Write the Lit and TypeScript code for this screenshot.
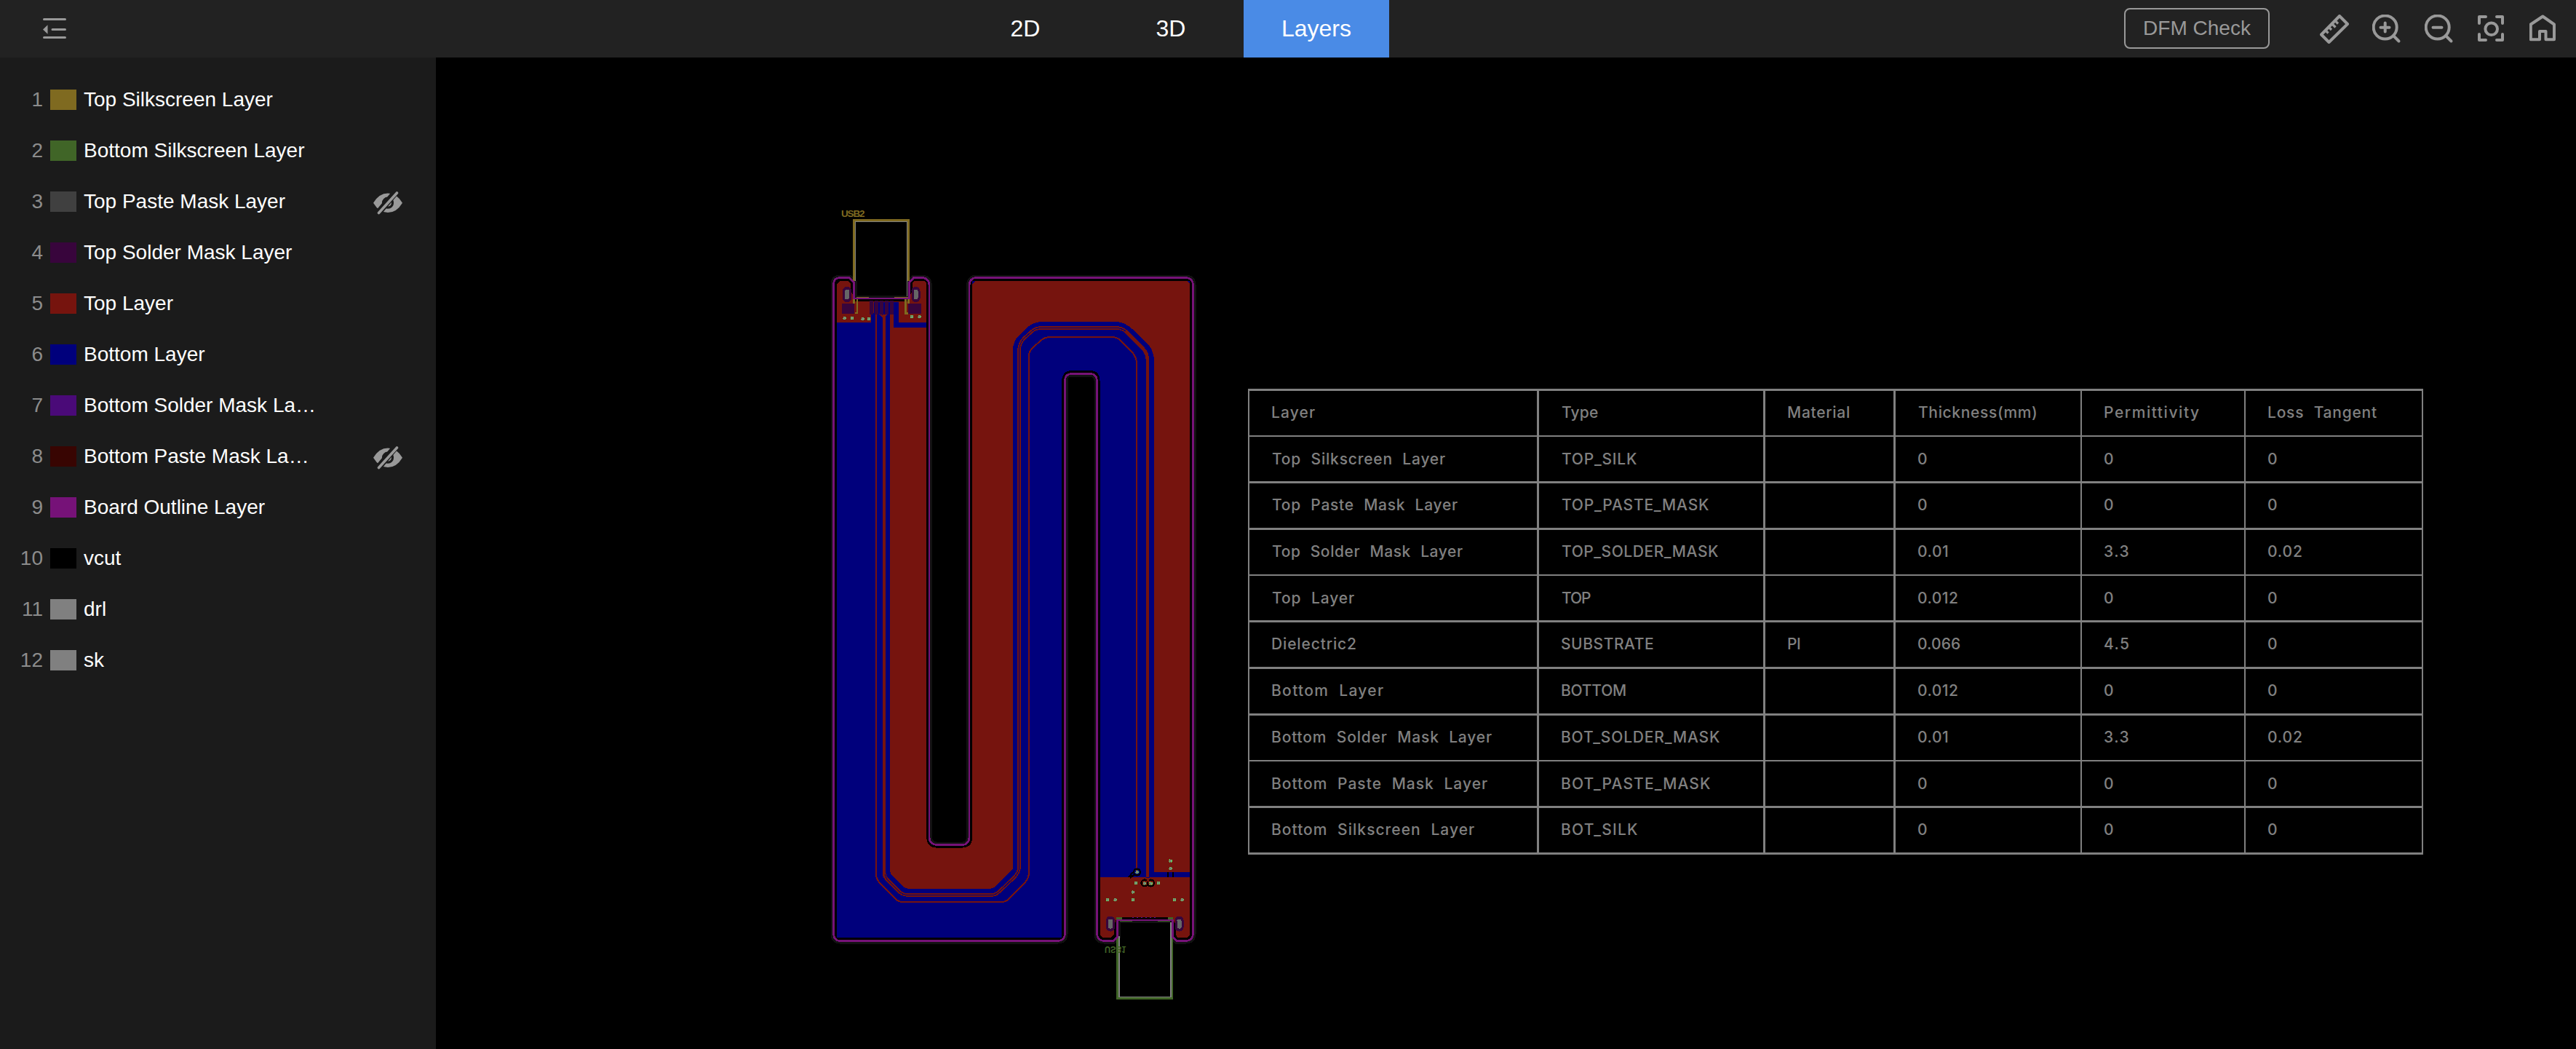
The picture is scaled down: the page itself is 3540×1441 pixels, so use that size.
import { LitElement, html, svg, css } from "lit";
import { customElement } from "lit/decorators.js";

interface Layer {
  name: string;
  color: string;
  hidden?: boolean;
}

const LAYERS: Layer[] = [
  { name: "Top Silkscreen Layer", color: "#7f6a20" },
  { name: "Bottom Silkscreen Layer", color: "#406527" },
  { name: "Top Paste Mask Layer", color: "#404040", hidden: true },
  { name: "Top Solder Mask Layer", color: "#38053c" },
  { name: "Top Layer", color: "#76140e" },
  { name: "Bottom Layer", color: "#00007c" },
  { name: "Bottom Solder Mask La…", color: "#4a0a78" },
  { name: "Bottom Paste Mask La…", color: "#380502", hidden: true },
  { name: "Board Outline Layer", color: "#761278" },
  { name: "vcut", color: "#000000" },
  { name: "drl", color: "#808080" },
  { name: "sk", color: "#808080" },
];

// Each stackup cell is a label and the width its lettering spans, in pixels.
type Cell = [string, number];
const ZERO: Cell = ["0", 12];
const NONE: Cell = ["", 0];

const STACKUP: Cell[][] = [
  [["Layer", 59], ["Type", 50], ["Material", 84], ["Thickness(mm)", 162], ["Permittivity", 130], ["Loss Tangent", 149]],
  [["Top Silkscreen Layer", 238], ["TOP_SILK", 103], NONE, ZERO, ZERO, ZERO],
  [["Top Paste Mask Layer", 255], ["TOP_PASTE_MASK", 202], NONE, ZERO, ZERO, ZERO],
  [["Top Solder Mask Layer", 262], ["TOP_SOLDER_MASK", 215], NONE, ["0.01", 41], ["3.3", 32.5], ["0.02", 46]],
  [["Top Layer", 113], ["TOP", 40], NONE, ["0.012", 54], ZERO, ZERO],
  [["Dielectric2", 115], ["SUBSTRATE", 126], ["PI", 17], ["0.066", 58], ["4.5", 33], ZERO],
  [["Bottom Layer", 153], ["BOTTOM", 88], NONE, ["0.012", 54], ZERO, ZERO],
  [["Bottom Solder Mask Layer", 302], ["BOT_SOLDER_MASK", 217], NONE, ["0.01", 41], ["3.3", 32.5], ["0.02", 46]],
  [["Bottom Paste Mask Layer", 296], ["BOT_PASTE_MASK", 204], NONE, ZERO, ZERO, ZERO],
  [["Bottom Silkscreen Layer", 278], ["BOT_SILK", 104], NONE, ZERO, ZERO, ZERO],
];

const STACKUP_FONT = "500 21px Inter, 'Liberation Sans', sans-serif";
const WORD_SPACING = 7;
const pen = document.createElement("canvas").getContext("2d")!;

/** Tracking and start offset that make a label span exactly `width` pixels. */
function tracking([label, width]: Cell): string {
  if (!label) return "";
  pen.font = STACKUP_FONT;
  const m = pen.measureText(label);
  const spaces = label.split(" ").length - 1;
  const ink = m.actualBoundingBoxLeft + m.actualBoundingBoxRight + spaces * WORD_SPACING;
  const gap = label.length > 1 ? (width - ink) / (label.length - 1) : 0;
  return `letter-spacing:${gap.toFixed(3)}px;margin-left:${m.actualBoundingBoxLeft.toFixed(2)}px`;
}

const OUTLINE =
  "M1145.5 1283V390Q1146 382 1154 381.5H1167L1173.5 388V410H1249.5V388L1255.5 381.5H1267Q1276 382 1277 391V1151Q1278 1160 1287 1160.5H1323Q1331 1160 1332 1151V391Q1333 382 1341 381.5H1630Q1639 382 1639.5 391V1283Q1639 1292 1630 1292.5H1617L1611.5 1287V1264H1535.5V1287L1530 1292.5H1517Q1508 1292 1507.5 1283V523Q1507 514 1499 513.5H1472Q1463.5 514 1463.5 523V1283Q1463 1292 1454 1292.5H1154Q1146 1292 1145.5 1283Z";

const BOTTOM_COPPER =
  "M1150 443H1273V1151Q1274 1164 1286 1164.500H1323Q1335 1164 1336 1152V386H1635V1210H1511.500V523Q1511 509 1498 509H1472Q1459 510 1459 525V1288H1150Z";

const TOP_COPPER =
  "M1223 450H1273V1151Q1275 1164 1286 1164.5H1323Q1335 1164 1336 1152V390L1340 386H1631L1635 390V1198H1586V497Q1586 484 1579 474L1556 452Q1545 442 1533 442H1430Q1418 443 1409 452L1400 461Q1392 469 1392 481V1193L1366 1219L1361 1221H1248L1242 1219L1224 1200L1223 1195Z";

const TOP_CONNECTOR = "M1150 443V390L1154 386H1166L1169 390V399L1175 410V414H1249V410L1254 399V388L1257 386H1270L1273 389V443Z";
const BOTTOM_CONNECTOR = "M1511.500 1205H1635V1284L1631 1288H1618L1616 1284V1272L1611 1260H1535L1530.500 1272V1284L1527 1288H1516L1511.500 1284Z";

const OUTER_TRACE =
  "M1204 425V1201Q1204 1208 1210 1214L1231 1235Q1235 1239 1240 1239H1377Q1382 1239 1386 1235L1407 1214Q1414 1207 1414 1198V489Q1414 482 1420 477L1430 468Q1436 463 1443 463H1528Q1534 463 1539 467L1556 484Q1562 491 1562 500V1196";
const PAIR =
  "M1215 432V1199Q1215 1204 1219 1208L1235 1224Q1240 1229.500 1248 1229.500H1362Q1368 1229.500 1373 1225L1394 1205Q1400.500 1198 1400.500 1191V480Q1401 472 1407 465L1417 456Q1423 450.500 1431 450.500H1534Q1541 450.500 1547 455L1571 479Q1577 486 1577 495V1206";
const PAIR_GAP =
  "M1216 1201L1219 1208L1235 1224Q1240 1229.500 1248 1229.500H1362Q1368 1229.500 1373 1225L1394 1205Q1400.500 1198 1400.500 1191V480Q1401 472 1407 465L1417 456Q1423 450.500 1431 450.500H1534Q1541 450.500 1547 455";

const VIAS: [number, number][] = [
  [1160.5, 437], [1171, 437], [1185.5, 438], [1194, 438], [1253, 435], [1263.5, 435],
  [1562.5, 1198], [1561, 1213], [1573, 1213.5], [1581.5, 1213.5], [1592, 1213],
  [1557, 1225.5], [1557, 1236], [1522, 1236], [1532.5, 1236], [1614, 1236], [1624.5, 1236],
  [1608.5, 1182.5], [1608.5, 1193],
];

const SLOTS: [number, number][] = [[1164, 404.5], [1258.5, 404.5], [1526, 1269], [1620.5, 1269]];
const FINGERS = [1194.5, 1202, 1209, 1216, 1223];

@customElement("pcb-board")
class PcbBoard extends LitElement {
  static styles = css`
    :host { display: block; width: 520px; height: 1362px; }
    svg { display: block; shape-rendering: crispEdges; }
    .halo { fill: none; stroke: #121212; stroke-width: 8; }
    .clear { fill: #000; }
    .outline { fill: none; stroke: #761278; stroke-width: 2.8; }
    .blue { fill: #00007c; }
    .red { fill: #76140e; }
    .trace { fill: none; stroke: #76140e; stroke-width: 2; }
    .pair { fill: none; stroke: #76140e; stroke-width: 4.600; }
    .gap { fill: none; stroke: #00007c; stroke-width: 1; }
    .mask { fill: #38053c; }
    .hole { fill: #666; }
    .silk { fill: #7f6a20; }
    .bsilk { fill: #406527; }
    .drill { fill: #808080; }
    .via { fill: #7c7c7c; stroke: #5fd35f; stroke-width: 1; stroke-dasharray: 2 1; }
    .ring { fill: none; stroke: #000; stroke-width: 2.200; }
    .dash { stroke: #4a0a9a; stroke-width: 1; stroke-dasharray: 2 4; }
    text { font: 700 13.500px "Liberation Sans", sans-serif; }
  `;

  render() {
    return html`<svg width="520" height="1362" viewBox="1130 79 520 1362">
      <path class="halo" d=${OUTLINE} />
      <path class="clear" d=${OUTLINE} />
      <path class="blue" d=${BOTTOM_COPPER} />
      <path class="red" d=${TOP_COPPER} />
      <path class="red" d=${TOP_CONNECTOR} />
      <path class="blue" d="M1197 430H1223V444H1197ZM1201 415H1230V430H1201ZM1228 415H1235V443H1273V450H1228Z" />
      <path class="red" d="M1223 431H1228V450H1223Z" />
      <path class="trace" d=${OUTER_TRACE} />
      <path class="pair" d=${PAIR} />
      <path class="gap" d=${PAIR_GAP} />
      <path class="trace" d="M1209 431L1214 436L1219 431" />
      <path class="red" d=${BOTTOM_CONNECTOR} />
      <path class="blue" d="M1586 1198H1635V1205H1586ZM1574 1205L1577 1208L1580 1205Z" />
      <path class="clear" d="M1603.500 1198H1606V1205H1603.500ZM1611 1198H1613V1205H1611Z" />
      <path class="ring" d="M1559 1201L1553 1206M1557 1198L1551 1205" />
      <circle class="ring" cx="1562.500" cy="1198" r="4.500" />
      <circle class="ring" cx="1573" cy="1213" r="4.500" />
      <circle class="ring" cx="1581.500" cy="1213" r="4.500" />
      <rect class="red" x="1576" y="1206" width="3" height="5" />
      ${FINGERS.map((x) => svg`<rect class="mask" x=${x} y="413" width="5" height="18.500" />`)}
      <rect class="mask" x="1157" y="417" width="17" height="14" />
      <rect class="mask" x="1248" y="417" width="18" height="14" />
      ${SLOTS.map(
        ([x, y]) => svg`
          <rect class="mask" x=${x - 6} y=${y - 10.5} width="12" height="21" rx="5.500" />
          <rect class="hole" x=${x - 3} y=${y - 6.5} width="6" height="13" rx="2" />`,
      )}
      <path class="silk" d="M1172 301H1250V386H1247V304H1175V386H1172ZM1172 411H1175V417H1172ZM1247 411H1250V417H1247ZM1177 408H1194V409H1177ZM1229 408H1248V409H1229ZM1177 411H1179V431H1175V429H1177ZM1243 411H1246V429H1248V432H1243Z" />
      <path class="drill" d="M1175 304H1247V407H1246V305H1176V386H1175Z" />
      <path class="bsilk" d="M1534 1288H1537V1370H1610V1288H1612V1373H1534ZM1534 1260H1542V1263H1534ZM1605 1260H1612V1263H1605ZM1539 1265H1556V1266H1539ZM1591 1265H1608V1266H1591Z" />
      <path class="drill" d="M1537 1286H1539V1369H1608V1267H1610V1370H1537Z" />
      <path class="dash" d="M1556 1260.500H1591" />
      <path class="outline" d=${OUTLINE} />
      ${VIAS.map(([x, y]) => svg`<circle class="via" cx=${x} cy=${y} r="1.900" />`)}
      <text class="silk" x="1156" y="297.800" textLength="32.500" lengthAdjust="spacing">USB2</text>
      <text class="bsilk" textLength="29.500" lengthAdjust="spacingAndGlyphs" transform="translate(1518 1300) scale(1 -1)">USB1</text>
    </svg>`;
  }
}

@customElement("stackup-table")
class StackupTable extends LitElement {
  static styles = css`
    :host {
      display: grid;
      box-sizing: border-box;
      width: 1615px;
      height: 640px;
      grid-template-columns: 397px 311px 179px 257px 225px 244px;
      grid-template-rows: 64px 63px 64px 64px 63px 64px 64px 64px 63px 64px;
      border-right: 2px solid #808080;
      border-bottom: 3px solid #808080;
      color: #808080;
      font: 500 21px/26px Inter, "Liberation Sans", sans-serif;
      word-spacing: 7px;
      white-space: pre;
    }
    .cell { box-sizing: border-box; border-top: 3px solid #808080; border-left: 2px solid #808080; padding: 17px 0 0 31px; overflow: hidden; }
    .wide { border-left-width: 3px; }
    .thin { border-top-width: 2px; padding-top: 18px; }
    .label { display: inline-block; }
  `;

  render() {
    return STACKUP.map((row, r) =>
      row.map(
        (cell, c) => html`<div class="cell ${c > 0 && c < 4 ? "wide" : ""} ${[1, 4, 8].includes(r) ? "thin" : ""}"><span class="label" style=${tracking(cell)}>${cell[0]}</span></div>`,
      ),
    );
  }
}

const ICONS = [
  svg`<path d="M2 27.500L27 2L38 13L12.500 38Z"/><path d="M8.500 22.500L11.500 25.500M13 18L16 21M17.500 13.500L21.500 17.500M22 9.500L25 12.500" stroke-width="3.200"/>`,
  svg`<circle cx="17.700" cy="17.500" r="16"/><path d="M29 29L36.500 36.500M11.500 17.700H23.500M17.700 11.500V23.500" stroke-linecap="round"/>`,
  svg`<circle cx="17.700" cy="17.500" r="16"/><path d="M29 29L36.500 36.500M11.500 17.700H23.500" stroke-linecap="round"/>`,
  svg`<circle cx="19.700" cy="19.700" r="8.300"/><path d="M3 12V3H12M27 3H35V12M35 27V35H27M12 35H3V27" stroke-linecap="round"/>`,
  svg`<path d="M1.800 34.200V13.500L18.300 2.500L34 13.500V34.200H22.500V23H14V34.200Z"/>`,
];

@customElement("app-root")
class AppRoot extends LitElement {
  static styles = css`
    :host {
      display: grid;
      grid-template: 79px 1fr / 599px 1fr;
      width: 3540px;
      height: 1441px;
      background: #000;
      font-family: Arial, "Liberation Sans", sans-serif;
      overflow: hidden;
    }
    .bar { grid-column: 1 / -1; display: grid; grid-template-columns: 1309px 600px 1fr; background: #222; }
    .menu { padding: 20px 0 0 55px; }
    .tabs { display: grid; grid-template-columns: repeat(3, 200px); }
    .tab { text-align: center; font-size: 32px; line-height: 78px; color: #fff; }
    .active { background: #4a8be6; }
    .tools { display: flex; justify-content: flex-end; align-items: flex-start; gap: 32px; padding: 11px 24px 0 0; }
    .check { box-sizing: border-box; width: 200px; height: 56px; margin-right: 37px; border: 2px solid #999; border-radius: 8px; color: #999; font-size: 28px; line-height: 51px; text-align: center; }
    .tool { display: block; width: 40px; height: 40px; margin-top: 9px; fill: none; stroke: #999; stroke-width: 4; stroke-linejoin: round; }
    .side { background: #1b1b1b; padding-top: 23px; }
    .row { display: grid; grid-template-columns: 59px 36px 322px 1fr; align-items: center; height: 70px; font-size: 28px; color: #fff; }
    .num { text-align: right; color: #8c8c8c; }
    .swatch { height: 28px; margin-left: 10px; width: 36px; }
    .name { margin-left: 20px; white-space: nowrap; line-height: 36px; }
    .eye { display: block; margin: 3px 0 0 95px; }
    .stage { display: flex; align-items: flex-start; gap: 65px; padding-left: 531px; }
    .stack { margin-top: 455px; }
  `;

  render() {
    return html`
      <header class="bar">
        <div class="menu">
          <svg width="40" height="40" fill="none" stroke="#999" stroke-width="3" stroke-linecap="round">
            <path d="M5.500 6.500H34.500M17 20.500H34.500M5.500 31.500H34.500" />
            <path d="M4 20.500L10.500 14.300V26.700Z" fill="#999" stroke="none" />
          </svg>
        </div>
        <nav class="tabs">
          <div class="tab">2D</div>
          <div class="tab">3D</div>
          <div class="tab active">Layers</div>
        </nav>
        <div class="tools">
          <div class="check">DFM Check</div>
          ${ICONS.map((icon) => html`<svg class="tool" viewBox="0 0 40 40">${icon}</svg>`)}
        </div>
      </header>
      <aside class="side">
        ${LAYERS.map(
          (layer, i) => html`<div class="row">
            <span class="num">${i + 1}</span>
            <span class="swatch" style="background:${layer.color}"></span>
            <span class="name">${layer.name}</span>
            ${layer.hidden
              ? html`<svg class="eye" width="42" height="32" viewBox="0 0 42 32">
                  <path fill="#999" d="M1 15.700Q9 2.500 21 2.500T41 15.700Q33 29 21 29T1 15.700Z" />
                  <circle cx="21" cy="15.700" r="6.500" fill="none" stroke="#1b1b1b" stroke-width="3.200" />
                  <circle cx="21" cy="15.700" r="2.600" fill="#1b1b1b" />
                  <path d="M6.500 31L32 .5" stroke="#1b1b1b" stroke-width="9" />
                  <path d="M8.500 29.500L33.500 2" stroke="#999" stroke-width="3.600" stroke-linecap="round" />
                </svg>`
              : null}
          </div>`,
        )}
      </aside>
      <main class="stage">
        <pcb-board></pcb-board>
        <stackup-table class="stack"></stackup-table>
      </main>
    `;
  }
}
